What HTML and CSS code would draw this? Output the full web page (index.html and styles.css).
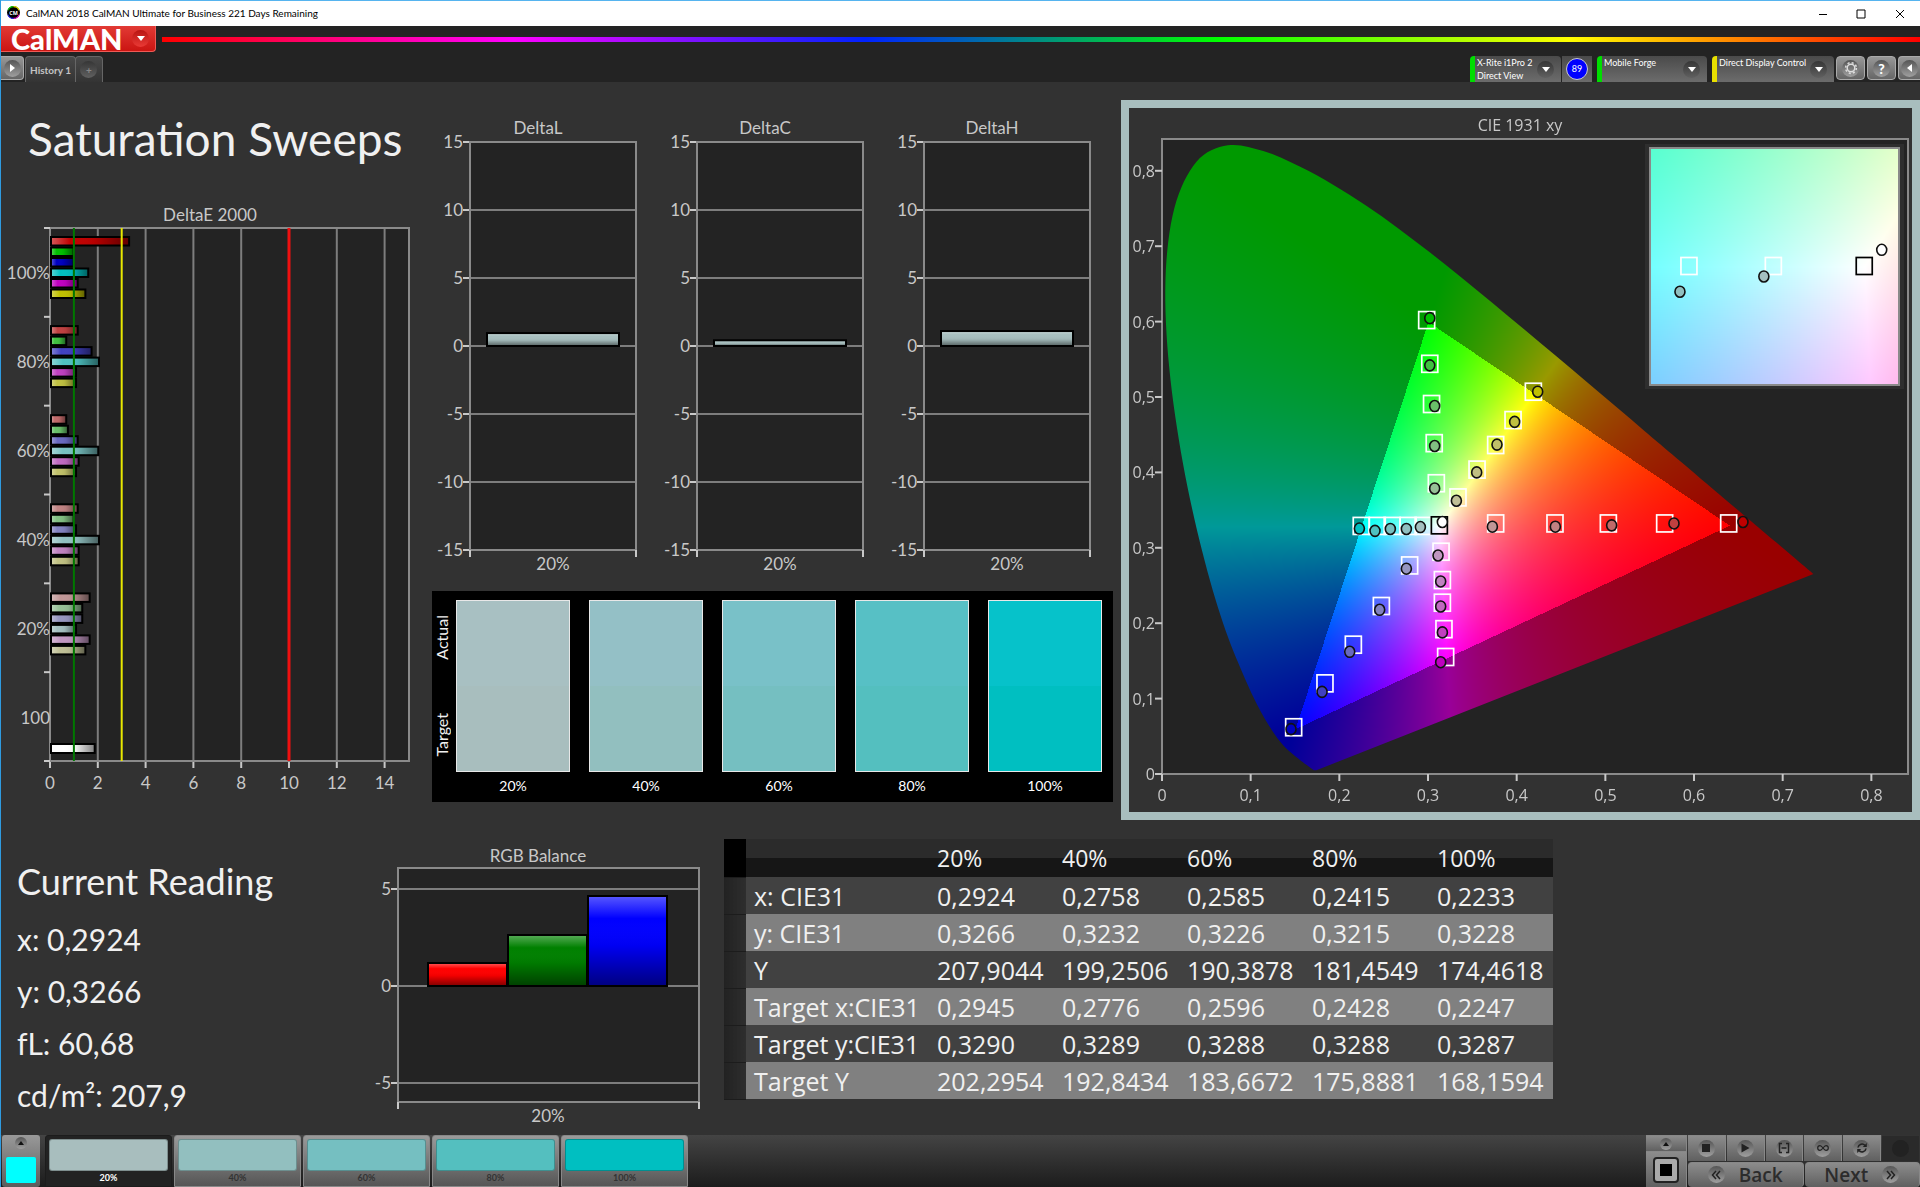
FILE: index.html
```html
<!DOCTYPE html>
<html lang="en">
<head>
    <meta charset="UTF-8">
    <meta name="viewport" content="width=device-width, initial-scale=1.0">
    <title>CalMAN 2018</title>
    <link rel="stylesheet" href="styles.css">
</head>
<body>
    <header>
        <div class="titlebar">
            <svg class="app-icon" viewBox="0 0 12 12">
                <circle cx="6" cy="6" r="6" fill="#000"/>
                <path d="M1 4A5.4 5.4 0 0 1 6 .6" stroke="#0c0" fill="none"/>
                <path d="M6 .6A5.4 5.4 0 0 1 11.2 4" stroke="#dd0" fill="none"/>
                <path d="M11.2 8A5.4 5.4 0 0 1 6 11.4" stroke="#e0c" fill="none"/>
                <path d="M6 11.4A5.4 5.4 0 0 1 .8 8" stroke="#22f" fill="none"/>
                <text x="6" y="8" class="app-icon-text">CM</text>
            </svg>
            <span class="titlebar-text">CalMAN 2018 CalMAN Ultimate for Business 221 Days Remaining</span>
            <button class="window-btn" aria-label="Minimize"><svg viewBox="0 0 10 10"><path d="M1 5.5h8"/></svg></button>
            <button class="window-btn" aria-label="Maximize"><svg viewBox="0 0 10 10"><path d="M1 1h8v8h-8z"/></svg></button>
            <button class="window-btn" aria-label="Close"><svg viewBox="0 0 10 10"><path d="M1 1l8 8M9 1l-8 8"/></svg></button>
        </div>
        <div class="brand-row">
            <button class="brand">CalMAN <span class="knob red"><i class="tri down"></i></span></button>
            <div class="rainbow"></div>
        </div>
        <div class="tab-row">
            <button class="square-btn edge" aria-label="Expand"><span class="knob"><i class="tri right"></i></span></button>
            <button class="tab">History 1</button>
            <button class="tab add" aria-label="Add history"><span class="knob dark">+</span></button>
            <div class="devices">
                <button class="device meter"><span class="device-name">X-Rite i1Pro 2<br>Direct View</span><span class="knob dark"><i class="tri down"></i></span></button>
                <button class="device-status"><span>89</span></button>
                <button class="device source"><span class="device-name">Mobile Forge</span><span class="knob dark"><i class="tri down"></i></span></button>
                <button class="device display"><span class="device-name">Direct Display Control</span><span class="knob dark"><i class="tri down"></i></span></button>
                <button class="square-btn" aria-label="Settings"><span class="knob">
                    <svg class="gear" viewBox="0 0 14 14"><circle cx="7" cy="7" r="3.8"/><circle cx="7" cy="7" r="5.4" stroke-dasharray="2.1 2.14"/></svg>
                </span></button>
                <button class="square-btn" aria-label="Help"><span class="knob help">?</span></button>
                <button class="square-btn edge-right" aria-label="Collapse"><span class="knob"><i class="tri left"></i></span></button>
            </div>
        </div>
    </header>

    <main>
        <section class="top">
            <div class="left">
                <h1>Saturation Sweeps</h1>
                <svg id="delta-e" class="chart" viewBox="0 0 430 595"></svg>
            </div>
            <div class="middle">
                <div class="deltas" id="deltas"></div>
                <div class="swatches">
                    <div class="swatch-side"><span>Actual</span><span>Target</span></div>
                    <div class="swatch s20"><div class="patch"></div>20%</div>
                    <div class="swatch s40"><div class="patch"></div>40%</div>
                    <div class="swatch s60"><div class="patch"></div>60%</div>
                    <div class="swatch s80"><div class="patch"></div>80%</div>
                    <div class="swatch s100"><div class="patch"></div>100%</div>
                </div>
            </div>
            <div class="cie">
                <canvas id="cie-colors" width="783" height="704"></canvas>
                <svg id="cie-chart" class="chart" viewBox="0 0 783 704"></svg>
            </div>
        </section>

        <section class="bottom">
            <div class="reading">
                <h2>Current Reading</h2>
                <p>x: 0,2924</p>
                <p>y: 0,3266</p>
                <p>fL: 60,68</p>
                <p>cd/m²: 207,9</p>
            </div>
            <svg id="rgb" class="chart" viewBox="0 0 363 295"></svg>
            <div class="data">
                <table>
                    <thead>
                        <tr><td class="stub"></td><th class="name"></th><th>20%</th><th>40%</th><th>60%</th><th>80%</th><th class="last">100%</th></tr>
                    </thead>
                    <tbody>
                        <tr><td class="stub"></td><th>x: CIE31</th><td>0,2924</td><td>0,2758</td><td>0,2585</td><td>0,2415</td><td>0,2233</td></tr>
                        <tr><td class="stub"></td><th>y: CIE31</th><td>0,3266</td><td>0,3232</td><td>0,3226</td><td>0,3215</td><td>0,3228</td></tr>
                        <tr><td class="stub"></td><th>Y</th><td>207,9044</td><td>199,2506</td><td>190,3878</td><td>181,4549</td><td>174,4618</td></tr>
                        <tr><td class="stub"></td><th>Target x:CIE31</th><td>0,2945</td><td>0,2776</td><td>0,2596</td><td>0,2428</td><td>0,2247</td></tr>
                        <tr><td class="stub"></td><th>Target y:CIE31</th><td>0,3290</td><td>0,3289</td><td>0,3288</td><td>0,3288</td><td>0,3287</td></tr>
                        <tr><td class="stub"></td><th>Target Y</th><td>202,2954</td><td>192,8434</td><td>183,6672</td><td>175,8881</td><td>168,1594</td></tr>
                    </tbody>
                </table>
            </div>
        </section>
    </main>

    <footer>
        <button class="pattern" aria-label="Current pattern"><span class="knob small"><i class="tri up"></i></span><span class="pattern-color"></span></button>
        <div class="levels">
            <button class="level s20 active"><span class="chip"></span>20%</button>
            <button class="level s40"><span class="chip"></span>40%</button>
            <button class="level s60"><span class="chip"></span>60%</button>
            <button class="level s80"><span class="chip"></span>80%</button>
            <button class="level s100"><span class="chip"></span>100%</button>
        </div>
        <div class="controls">
            <div class="view-control">
                <button class="ctl" aria-label="More"><span class="knob small"><i class="tri up"></i></span></button>
                <button class="ctl view" aria-label="Pattern window"><span class="window-icon"></span></button>
            </div>
            <div class="transport">
                <div class="transport-row">
                    <button class="ctl" aria-label="Stop"><span class="knob"><svg viewBox="0 0 12 12"><path d="M2 2h8v8h-8z" fill="#222"/></svg></span></button>
                    <button class="ctl" aria-label="Read"><span class="knob"><svg viewBox="0 0 12 12"><path d="M2.5 1.5l8 4.5-8 4.5z" fill="#222"/></svg></span></button>
                    <button class="ctl" aria-label="Read series"><span class="knob"><svg viewBox="0 0 12 12"><path d="M4 1.5h-2.500v9H4M8 1.500h2.500v9H8M3.500 6h5" fill="none" stroke="#222" stroke-width="1.500"/></svg></span></button>
                    <button class="ctl" aria-label="Read continuous"><span class="knob"><svg viewBox="0 0 12 12"><path d="M6 6C4.5 4 3.8 3.7 3 3.7a2.3 2.3 0 0 0 0 4.6C3.8 8.3 4.5 8 6 6S8.2 3.7 9 3.7a2.3 2.3 0 0 1 0 4.6C8.2 8.3 7.5 8 6 6z" fill="none" stroke="#222" stroke-width="1.2"/></svg></span></button>
                    <button class="ctl" aria-label="Refresh"><span class="knob"><svg viewBox="0 0 12 12"><path d="M2 5.5a4 4 0 0 1 7-2M10 6.5a4 4 0 0 1-7 2" fill="none" stroke="#222" stroke-width="1.6"/><path d="M10.8 1v4h-4zM1.2 11V7h4z" fill="#222"/></svg></span></button>
                    <button class="ctl off" aria-label="Status"><span class="knob dark"></span></button>
                </div>
                <div class="nav-row">
                    <button class="ctl nav"><span class="knob"><svg viewBox="0 0 12 12"><path d="M6 2L2.5 6 6 10M10 2L6.5 6 10 10" fill="none" stroke="#222" stroke-width="1.5"/></svg></span>Back</button>
                    <button class="ctl nav">Next<span class="knob"><svg viewBox="0 0 12 12"><path d="M2 2l3.5 4L2 10M6 2l3.5 4L6 10" fill="none" stroke="#222" stroke-width="1.5"/></svg></span></button>
                </div>
            </div>
        </div>
    </footer>
    <script src="script.js"></script>
</body>
</html>
```
FILE: styles.css
```css
* {
    box-sizing: border-box;
}
body {
    margin: 0;
    min-height: 100vh;
    display: flex;
    flex-direction: column;
    background: #323232;
    border-left: 1px solid #2f9be0;
    font-family: Lato, "Open Sans", sans-serif;
    color: #f0f0f0;
}
button {
    font: inherit;
    color: inherit;
    margin: 0;
    padding: 0;
    border: none;
    background: none;
}
h1, h2, p {
    margin: 0;
    font-weight: 400;
}
header {
    background: #232323;
}

/* title bar */
.titlebar {
    display: flex;
    align-items: center;
    height: 26px;
    padding: 0 6px 2px;
    background: #fff;
    color: #000;
    border-top: 1px solid #56b4ef;
}
.app-icon {
    width: 13px;
    height: 13px;
    margin-right: 6px;
}
.app-icon-text {
    font: bold 5px "Open Sans", sans-serif;
    fill: #fff;
    text-anchor: middle;
}
.titlebar-text {
    flex: 1;
    font-size: 10px;
}
.window-btn {
    width: 38px;
    height: 22px;
}
.window-btn svg {
    width: 10px;
    height: 10px;
    fill: none;
    stroke: #000;
}
.window-btn:last-child {
    width: 34px;
    text-align: right;
    padding-right: 9px;
}

/* logo and tabs */
.brand-row {
    display: flex;
    align-items: center;
    gap: 6px;
    height: 26px;
}
.brand {
    display: flex;
    align-items: center;
    justify-content: space-between;
    width: 155px;
    height: 26px;
    padding: 0 6px 0 10px;
    border: 1px solid #ef5a55;
    border-width: 0 1px 1px 0;
    border-radius: 0 0 4px 0;
    background: linear-gradient(#e23a35, #cb1512);
    font-size: 29px;
    font-weight: 900;
    line-height: 24px;
    color: #fff;
}
.rainbow {
    flex: 1;
    height: 5px;
    background: linear-gradient(to right, #f00, #f0f 20%, #02f 40%, #0f0 60%, #ff0 80%, #f00);
}
.tab-row {
    display: flex;
    height: 30px;
    padding-top: 4px;
    gap: 1px;
}
.knob {
    display: inline-flex;
    align-items: center;
    justify-content: center;
    flex: none;
    width: 17px;
    height: 17px;
    border-radius: 50%;
    background: linear-gradient(#555, #a0a0a0);
}
.knob.dark {
    background: linear-gradient(#363636, #606060);
}
.knob.red {
    background: linear-gradient(#b81512, #ea3a36);
}
.knob.small {
    width: 12px;
    height: 12px;
}
.tri {
    border: 4px solid transparent;
}
.tri.down {
    border-top: 5px solid #fff;
    border-bottom: 0;
}
.tri.up {
    border-width: 3px;
    border-bottom: 4px solid #111;
    border-top: 0;
}
.tri.right {
    border-left: 5px solid #fff;
    border-right: 0;
}
.tri.left {
    border-right: 5px solid #fff;
    border-left: 0;
}
.square-btn {
    display: flex;
    align-items: center;
    justify-content: center;
    width: 29px;
    height: 24px;
    border: 1px solid #aaa;
    border-radius: 4px;
    background: linear-gradient(#979797, #666);
}
.square-btn.edge {
    width: 23px;
    border-left: none;
    border-radius: 0 4px 4px 0;
}
.square-btn.edge-right {
    width: 22px;
    border-right: none;
    border-radius: 4px 0 0 4px;
}
.tab {
    height: 26px;
    padding: 0 4px;
    border: 1px solid #666;
    border-bottom: none;
    border-radius: 4px 4px 0 0;
    background: linear-gradient(#494949, #343434);
    font-size: 10px;
    font-weight: 700;
    color: #c4c4c4;
}
.tab.add {
    width: 28px;
    margin-left: -2px;
    color: #888;
}
.devices {
    display: flex;
    gap: 2px;
    margin-left: auto;
}
.device {
    display: flex;
    justify-content: space-between;
    align-items: center;
    height: 26px;
    padding: 0 7px 0 2px;
    border-left: 5px solid #0d0;
    border-radius: 4px 4px 0 0;
    background: linear-gradient(#4a4a4a, #6c6c6c);
    font-size: 9px;
    line-height: 13px;
    text-align: left;
    color: #fff;
}
.device-name {
    align-self: flex-start;
    white-space: nowrap;
}
.device.meter {
    width: 91px;
}
.device.source {
    width: 110px;
    margin: 0 3px;
}
.device.display {
    width: 122px;
    border-left-color: #e8e000;
}
.device-status {
    width: 30px;
    height: 26px;
    margin-left: -1px;
    background: linear-gradient(#4a4a4a, #6c6c6c);
}
.device-status span {
    display: block;
    width: 22px;
    height: 22px;
    margin: 0 auto;
    border: 1px solid #ccc;
    border-radius: 50%;
    background: #00f;
    font-size: 9px;
    line-height: 20px;
    color: #fff;
}
.gear {
    width: 14px;
    height: 14px;
    fill: none;
    stroke: #ddd;
    stroke-width: 1.5;
}
.help {
    font-size: 14px;
    font-weight: 900;
    color: #fff;
}

/* workspace */
main {
    flex: 1;
}
.top {
    display: grid;
    grid-template-columns: 430fr 690fr 799fr;
    align-items: start;
    padding-top: 18px;
}
.chart {
    display: block;
    width: 100%;
    font-size: 17px;
}
.chart text {
    fill: #c8c8c8;
}
.chart .line {
    stroke: #8a8a8a;
    stroke-width: 2;
    fill: none;
}
.chart .grid {
    stroke: #7d7d7d;
    stroke-width: 2;
}
.chart .tick {
    stroke: #c8c8c8;
    stroke-width: 2;
}
.chart .mid {
    text-anchor: middle;
}
.chart .end {
    text-anchor: end;
}
h1 {
    padding: 11px 0 0 27px;
    font-size: 46px;
    line-height: 56px;
    height: 105px;
}
.deltas {
    display: grid;
    grid-template-columns: repeat(3, 1fr);
    padding-right: 9px;
    margin-top: 16px;
}
.swatches {
    display: flex;
    gap: 19px;
    margin: 15px 8px 0 1px;
    padding: 9px 11px 0 0;
    height: 211px;
    background: #000;
    font-size: 14px;
}
.swatch-side {
    display: flex;
    flex-direction: column;
    justify-content: space-between;
    align-items: center;
    width: 20px;
    height: 172px;
    padding: 15px 0;
    margin-right: -15px;
    font-size: 16px;
    line-height: 20px;
}
.swatch-side span {
    writing-mode: vertical-rl;
    transform: rotate(180deg);
}
.swatch {
    flex: 1;
    text-align: center;
    color: #fff;
}
.patch {
    height: 172px;
    margin-bottom: 5px;
    border: 1px solid #e8e8e8;
    background: linear-gradient(var(--actual) 50%, var(--target) 50%);
}
.s20 {
    --actual: #a8c0c2;
    --target: #a8bebe;
}
.s40 {
    --actual: #94c0c6;
    --target: #92bfbf;
}
.s60 {
    --actual: #79c1c8;
    --target: #75bfc1;
}
.s80 {
    --actual: #57c0c5;
    --target: #54bfbf;
}
.s100 {
    --actual: #06c2ca;
    --target: #00bfc1;
}
.cie {
    display: grid;
    border: 8px solid #a8bebe;
}
.cie canvas, .cie svg {
    grid-area: 1 / 1;
    width: 100%;
}
#cie-chart {
    font-family: "Open Sans", sans-serif;
    font-size: 16px;
}

.bottom {
    display: grid;
    grid-template-columns: 360fr 363fr 1196fr;
    align-items: start;
    padding-top: 19px;
}
.reading {
    padding: 15px 0 0 16px;
}
h2 {
    font-size: 36px;
    line-height: 54px;
    margin-bottom: 5px;
}
.reading p {
    font-size: 30px;
    line-height: 52px;
}
table {
    width: 69.3%;
    border-collapse: collapse;
    table-layout: fixed;
    font-family: "Open Sans", sans-serif;
    font-size: 25px;
}
th, td {
    height: 37px;
    padding: 0;
    line-height: 36px;
    font-weight: 400;
    text-align: left;
    white-space: nowrap;
}
thead th {
    width: 125px;
    height: 38px;
    background: linear-gradient(#2b2b2b 50%, #161616 50%);
    font-size: 23px;
}
thead .name {
    width: 191px;
}
thead .last {
    width: auto;
}
tbody th {
    padding-left: 8px;
}
tbody tr {
    background: #414141;
}
tbody tr:nth-child(even) {
    background: #808080;
}
.stub {
    width: 22px;
    background: linear-gradient(to right, #222, #2e2e2e);
    border-bottom: 1px solid #1c1c1c;
}
thead .stub {
    background: #000;
}

/* footer */
footer {
    display: flex;
    height: 52px;
    background: linear-gradient(#444, #1c1c1c);
}
.pattern {
    display: flex;
    flex-direction: column;
    align-items: center;
    justify-content: space-between;
    width: 38px;
    margin: 0 5px 0 1px;
    padding: 2px 0 4px;
    border-radius: 3px;
    background: linear-gradient(#999, #5c5c5c);
}
.pattern-color {
    width: 30px;
    height: 26px;
    border-radius: 2px;
    background: #0ff;
}
.levels {
    display: flex;
    gap: 2px;
}
.level {
    display: flex;
    flex-direction: column;
    width: 127px;
    padding: 3px 3px 0;
    border: 1px solid #888;
    border-radius: 3px 3px 0 0;
    background: linear-gradient(#9a9a9a, #555);
    font-size: 9px;
    font-weight: 700;
    line-height: 14px;
    color: #333;
    text-align: center;
}
.level.active {
    border-color: #1c1c1c;
    background: #222;
    color: #fff;
}
.chip {
    flex: none;
    height: 32px;
    border: 1px solid rgba(0, 0, 0, 0.25);
    border-radius: 3px;
    background: var(--target);
}
.controls {
    display: flex;
    gap: 1px;
    margin-left: auto;
}
.view-control {
    display: flex;
    flex-direction: column;
    width: 41px;
}
.ctl {
    display: flex;
    align-items: center;
    justify-content: center;
    flex: 1;
    border: 1px solid #888;
    border-width: 1px 1px 0 0;
    background: linear-gradient(#8c8c8c, #606060);
}
.ctl svg {
    width: 12px;
    height: 12px;
}
.ctl.view {
    flex: 0 0 36px;
}
.window-icon {
    width: 26px;
    height: 26px;
    border: 2px solid #222;
    border-radius: 4px;
    background: linear-gradient(#000, #000) center / 12px 12px no-repeat #aaa;
}
.transport {
    width: 232px;
    display: flex;
    flex-direction: column;
    gap: 1px;
}
.transport-row, .nav-row {
    display: flex;
    flex: 1;
    gap: 1px;
}
.ctl.off {
    border-color: #333;
    background: #2a2a2a;
}
.ctl.off .knob {
    background: #222;
}
.nav {
    gap: 14px;
    border-radius: 4px;
    font-family: "Open Sans", sans-serif;
    font-size: 19px;
    font-weight: 600;
    line-height: 22px;
    color: #2c2c2c;
}
```
FILE: script.js
```js
// channel value of the unsaturated channels at 20, 40, 60, 80 and 100 %
const LOW = [150, 130, 105, 64, 0];
const HUES = {
    red: [1, 0, 0], green: [0, 1, 0], blue: [0, 0, 1],
    cyan: [0, 1, 1], magenta: [1, 0, 1], yellow: [1, 1, 0]
};

function shade(hue, level) {
    const low = hue === 'cyan' && level < 4 ? LOW[level] + 14 : LOW[level];
    return 'rgb(' + HUES[hue].map(c => c ? 192 : low).join(',') + ')';
}
function text(x, y, value, cls) {
    return `<text x="${x}" y="${y}" class="${cls}">${value}</text>`;
}
function line(x1, y1, x2, y2, cls) {
    return `<path d="M${x1} ${y1}L${x2} ${y2}" class="${cls}"/>`;
}
function bar(x, y, w, h, fill, gloss) {
    return `<rect x="${x}" y="${y}" width="${w}" height="${h}" fill="${fill}"/>
        <rect x="${x}" y="${y}" width="${w}" height="${h}" fill="url(#${gloss})" stroke="#000" stroke-width="2"/>`;
}
function gloss(id, x2, y2) {
    return `<defs><linearGradient id="${id}" x1="0" y1="0" x2="${x2}" y2="${y2}">
        <stop offset="0" stop-color="#fff" stop-opacity=".35"/>
        <stop offset=".25" stop-color="#fff" stop-opacity="0"/>
        <stop offset=".55" stop-color="#000" stop-opacity=".05"/>
        <stop offset="1" stop-color="#000" stop-opacity=".5"/>
    </linearGradient></defs>`;
}

function drawDeltaE() {
    const left = 49, right = 408, top = 23, bottom = 556, unit = 23.9;
    const groups = [
        [3.31, 0.99, 0.99, 1.6, 1.16, 1.48],
        [1.16, 0.68, 1.74, 2.05, 1.09, 1.09],
        [0.68, 0.75, 1.16, 2.02, 1.2, 1.09],
        [1.16, 0.99, 1.09, 2.05, 1.2, 1.2],
        [1.66, 1.35, 1.35, 1.09, 1.66, 1.48]
    ];
    const step = (bottom - top) / 6;
    let out = gloss('gloss-x', 1, 0);
    out += text(209, 16, 'DeltaE 2000', 'mid');
    out += `<rect x="${left}" y="${top}" width="${right - left}" height="${bottom - top}" fill="#232323"/>`;
    for (let v = 0; v <= 14; v += 2) {
        const x = left + v * unit;
        out += line(x, top, x, bottom, 'grid') + line(x, bottom, x, bottom + 7, 'tick');
        out += text(x, bottom + 28, v, 'mid');
    }
    out += `<rect x="${left}" y="${top}" width="${right - left}" height="${bottom - top}" class="line"/>`;
    ['100%', '80%', '60%', '40%', '20%', '100'].forEach((label, i) => {
        out += line(left - 6, top + i * step, left, top + i * step, 'tick');
        out += text(left, top + (i + 0.5) * step + 7, label, 'end');
    });
    out += line(left - 6, bottom, left, bottom, 'tick');
    groups.forEach((values, g) => {
        Object.keys(HUES).forEach((hue, i) => {
            out += bar(left + 1, 32 + g * 89.1 + i * 10.5, values[i] * unit - 1, 8.5, shade(hue, 4 - g), 'gloss-x');
        });
    });
    out += bar(left + 1, 539, 1.87 * unit - 1, 9, '#fff', 'gloss-x');
    [[1, '#007800', 2], [3, '#e8e800', 2], [10, '#f01010', 3]].forEach(([v, color, width]) => {
        const x = left + v * unit;
        out += `<path d="M${x} ${top}V${bottom}" stroke="${color}" stroke-width="${width}"/>`;
    });
    document.getElementById('delta-e').innerHTML = out;
}

function drawDeltas() {
    const box = document.getElementById('deltas');
    [['DeltaL', 0.95], ['DeltaC', 0.42], ['DeltaH', 1.1]].forEach(([name, value], n) => {
        const left = 39, right = 205, top = 26, bottom = 434, zero = 230;
        let out = gloss('gloss-d' + n, 0, 1);
        out += text(107, 18, name, 'mid');
        out += `<rect x="${left}" y="${top}" width="${right - left}" height="${bottom - top}" fill="#232323"/>`;
        for (let v = 15; v >= -15; v -= 5) {
            const y = zero - v * 13.6;
            out += line(left, y, right, y, 'grid') + line(left - 7, y, left, y, 'tick');
            out += text(left - 7, y + 6, v, 'end');
        }
        out += `<rect x="${left}" y="${top}" width="${right - left}" height="${bottom - top}" class="line"/>`;
        out += line(left, bottom, left, bottom + 7, 'tick') + line(right, bottom, right, bottom + 7, 'tick');
        out += bar(56, zero - value * 13.6, 132, value * 13.6, '#a8c0c0', 'gloss-d' + n);
        out += text(122, 454, '20%', 'mid');
        box.innerHTML += `<svg class="chart" viewBox="0 0 227 460">${out}</svg>`;
    });
}

function drawRgb() {
    const left = 37, right = 338, top = 29, bottom = 263, zero = 147;
    let out = gloss('gloss-y', 0, 1);
    out += text(177, 23, 'RGB Balance', 'mid');
    out += `<rect x="${left}" y="${top}" width="${right - left}" height="${bottom - top}" fill="#232323"/>`;
    [5, 0, -5].forEach(v => {
        const y = zero - v * 19.4;
        out += line(left, y, right, y, 'grid') + line(left - 7, y, left, y, 'tick');
        out += text(left - 7, y + 6, v, 'end');
    });
    out += `<rect x="${left}" y="${top}" width="${right - left}" height="${bottom - top}" class="line"/>`;
    out += line(left, bottom, left, bottom + 7, 'tick') + line(right, bottom, right, bottom + 7, 'tick');
    [['#f00', 23], ['#008000', 51], ['#00f', 90]].forEach(([color, h], i) => {
        out += bar(67 + i * 80, zero - h, 79, h, color, 'gloss-y');
    });
    out += text(187, 283, '20%', 'mid');
    document.getElementById('rgb').innerHTML = out;
}

// CIE 1931 chart
const PLOT = { x: 33, y: 31, w: 746, h: 635, sx: 886.7, sy: 754 };
const INSET = { x: 521, y: 40, w: 249, h: 237, x0: 0.2698, y0: 0.3040, sx: 4994, sy: 4760 };
const PRIMARIES = [[0.64, 0.33], [0.3, 0.6], [0.15, 0.06]];
const LOCUS = [
    [.1741, .005], [.1714, .0051], [.1689, .0069], [.1644, .0109], [.1566, .0177], [.144, .0297], [.1355, .0399],
    [.1241, .0578], [.1096, .0868], [.0913, .1327], [.0687, .2007], [.0454, .295], [.0235, .4127], [.0082, .5384],
    [.0039, .6548], [.0139, .7502], [.0389, .812], [.0743, .8338], [.1142, .8262], [.1547, .8059], [.1929, .7816],
    [.2296, .7543], [.2658, .7243], [.3016, .6923], [.3373, .6589], [.3731, .6245], [.4087, .5896], [.4441, .5547],
    [.4788, .5202], [.5125, .4866], [.5448, .4544], [.5752, .4242], [.627, .3725], [.6658, .334], [.6915, .3083],
    [.719, .2809], [.7347, .2653]
];
const POINTS = {
    red: {
        target: [[.3763, .3323], [.4432, .3323], [.5034, .3323], [.5669, .3323], [.6391, .3323]],
        actual: [[.3726, .328], [.4436, .328], [.5071, .3298], [.5774, .3323], [.6552, .3342]]
    },
    green: {
        target: [[.3094, .3856], [.307, .4388], [.304, .4907], [.302, .544], [.2985, .602]],
        actual: [[.3075, .3787], [.3075, .435], [.3075, .488], [.302, .542], [.302, .6046]]
    },
    blue: {
        target: [[.2793, .2766], [.2474, .2228], [.2158, .1715], [.1838, .1202], [.1485, .062]],
        actual: [[.2756, .2723], [.2455, .2178], [.2117, .1621], [.1805, .1089], [.1455, .0595]]
    },
    cyan: {
        target: [[.2945, .329], [.2776, .329], [.2596, .329], [.2428, .329], [.2247, .329]],
        actual: [[.2914, .3275], [.2756, .325], [.2575, .325], [.2402, .3225], [.2226, .3255]]
    },
    magenta: {
        target: [[.3147, .2948], [.3162, .2572], [.3162, .2272], [.318, .1921], [.3199, .1552]],
        actual: [[.3113, .2898], [.3143, .2554], [.3143, .2222], [.3162, .1878], [.3143, .1483]]
    },
    yellow: {
        target: [[.3338, .3668], [.3553, .4037], [.3763, .4363], [.3959, .4694], [.4188, .507]],
        actual: [[.332, .3624], [.3549, .4], [.3778, .4369], [.3977, .467], [.4237, .507]]
    }
};

function inGamut(x, y) {
    return PRIMARIES.every(([ax, ay], i) => {
        const [bx, by] = PRIMARIES[(i + 1) % 3];
        return (bx - ax) * (y - ay) - (by - ay) * (x - ax) >= 0;
    });
}
function xyToRgb(x, y) {
    const z = 1 - x - y;
    const rgb = [
        3.2406 * x - 1.5372 * y - 0.4986 * z,
        -0.9689 * x + 1.8758 * y + 0.0415 * z,
        0.0557 * x - 0.204 * y + 1.057 * z
    ].map(c => Math.max(c, 0));
    const max = Math.max(...rgb);
    return rgb.map(c => 255 * c / max);
}
function colorField(w, h, toXy) {
    const canvas = document.createElement('canvas');
    canvas.width = w;
    canvas.height = h;
    const ctx = canvas.getContext('2d');
    const image = ctx.createImageData(w, h);
    for (let j = 0; j < h; j++) {
        for (let i = 0; i < w; i++) {
            const [x, y] = toXy(i, j);
            const dim = inGamut(x, y) ? 1 : 0.6;
            const rgb = xyToRgb(x, y);
            const p = (j * w + i) * 4;
            image.data[p] = rgb[0] * dim;
            image.data[p + 1] = rgb[1] * dim;
            image.data[p + 2] = rgb[2] * dim;
            image.data[p + 3] = 255;
        }
    }
    ctx.putImageData(image, 0, 0);
    return canvas;
}

function drawCieColors() {
    const ctx = document.getElementById('cie-colors').getContext('2d');
    const bottom = PLOT.y + PLOT.h;
    ctx.fillStyle = '#232323';
    ctx.fillRect(PLOT.x, PLOT.y, PLOT.w, PLOT.h);

    ctx.save();
    const pts = LOCUS.map(([x, y]) => [PLOT.x + x * PLOT.sx, bottom - y * PLOT.sy]);
    ctx.beginPath();
    ctx.moveTo(pts[0][0], pts[0][1]);
    for (let i = 0; i < pts.length - 1; i++) {
        const a = pts[Math.max(i - 1, 0)], b = pts[i], c = pts[i + 1], d = pts[Math.min(i + 2, pts.length - 1)];
        ctx.bezierCurveTo(b[0] + (c[0] - a[0]) / 6, b[1] + (c[1] - a[1]) / 6,
            c[0] - (d[0] - b[0]) / 6, c[1] - (d[1] - b[1]) / 6, c[0], c[1]);
    }
    ctx.closePath();
    ctx.clip();
    ctx.drawImage(colorField(PLOT.w, PLOT.h, (i, j) => [i / PLOT.sx, (PLOT.h - j) / PLOT.sy]), PLOT.x, PLOT.y);
    ctx.restore();

    ctx.fillStyle = '#2e2e2e';
    ctx.fillRect(INSET.x - 5, INSET.y - 4, INSET.w + 10, INSET.h + 8);
    ctx.drawImage(colorField(INSET.w, INSET.h, (i, j) => [
        INSET.x0 + i / INSET.sx, INSET.y0 + (INSET.h - j) / INSET.sy
    ]), INSET.x, INSET.y);
}

function square(x, y, color) {
    return `<rect x="${x - 8}" y="${y - 8.5}" width="16" height="17" fill="none" stroke="${color}" stroke-width="1.7"/>`;
}
function dot(x, y, fill) {
    return `<ellipse cx="${x}" cy="${y}" rx="5" ry="5.5" fill="${fill}" stroke="#111" stroke-width="1.6"/>`;
}

function drawCieChart() {
    const bottom = PLOT.y + PLOT.h;
    const main = (x, y) => [PLOT.x + x * PLOT.sx, bottom - y * PLOT.sy];
    const inset = (x, y) => [INSET.x + (x - INSET.x0) * INSET.sx, INSET.y + INSET.h - (y - INSET.y0) * INSET.sy];
    let out = text(391, 23, 'CIE 1931 xy', 'mid');
    out += `<rect x="${PLOT.x}" y="${PLOT.y}" width="${PLOT.w}" height="${PLOT.h}" class="line"/>`;
    for (let i = 0; i <= 8; i++) {
        const label = i ? '0,' + i : '0';
        const [x, y] = main(i / 10, i / 10);
        out += line(x, bottom, x, bottom + 7, 'tick') + line(PLOT.x - 7, y, PLOT.x, y, 'tick');
        out += text(x, bottom + 27, label, 'mid') + text(PLOT.x - 7, y + 6, label, 'end');
    }
    for (const hue in POINTS) {
        POINTS[hue].target.forEach(p => out += square(...main(...p), '#fff'));
    }
    out += square(...main(0.3128, 0.3298), '#000');
    for (const hue in POINTS) {
        POINTS[hue].actual.forEach((p, i) => out += dot(...main(...p), shade(hue, i)));
    }
    out += dot(...main(0.3162, 0.3342), '#fff');

    out += `<rect x="${INSET.x}" y="${INSET.y}" width="${INSET.w}" height="${INSET.h}" class="line"/>`;
    out += square(...inset(0.2776, 0.329), '#fff') + square(...inset(0.2945, 0.329), '#fff');
    out += square(...inset(0.3127, 0.329), '#000');
    out += dot(...inset(0.2758, 0.3236), shade('cyan', 1)) + dot(...inset(0.2926, 0.3268), shade('cyan', 0));
    out += dot(...inset(0.3162, 0.3324), '#fff');
    document.getElementById('cie-chart').innerHTML = out;
}

drawDeltaE();
drawDeltas();
drawRgb();
drawCieColors();
drawCieChart();
```
